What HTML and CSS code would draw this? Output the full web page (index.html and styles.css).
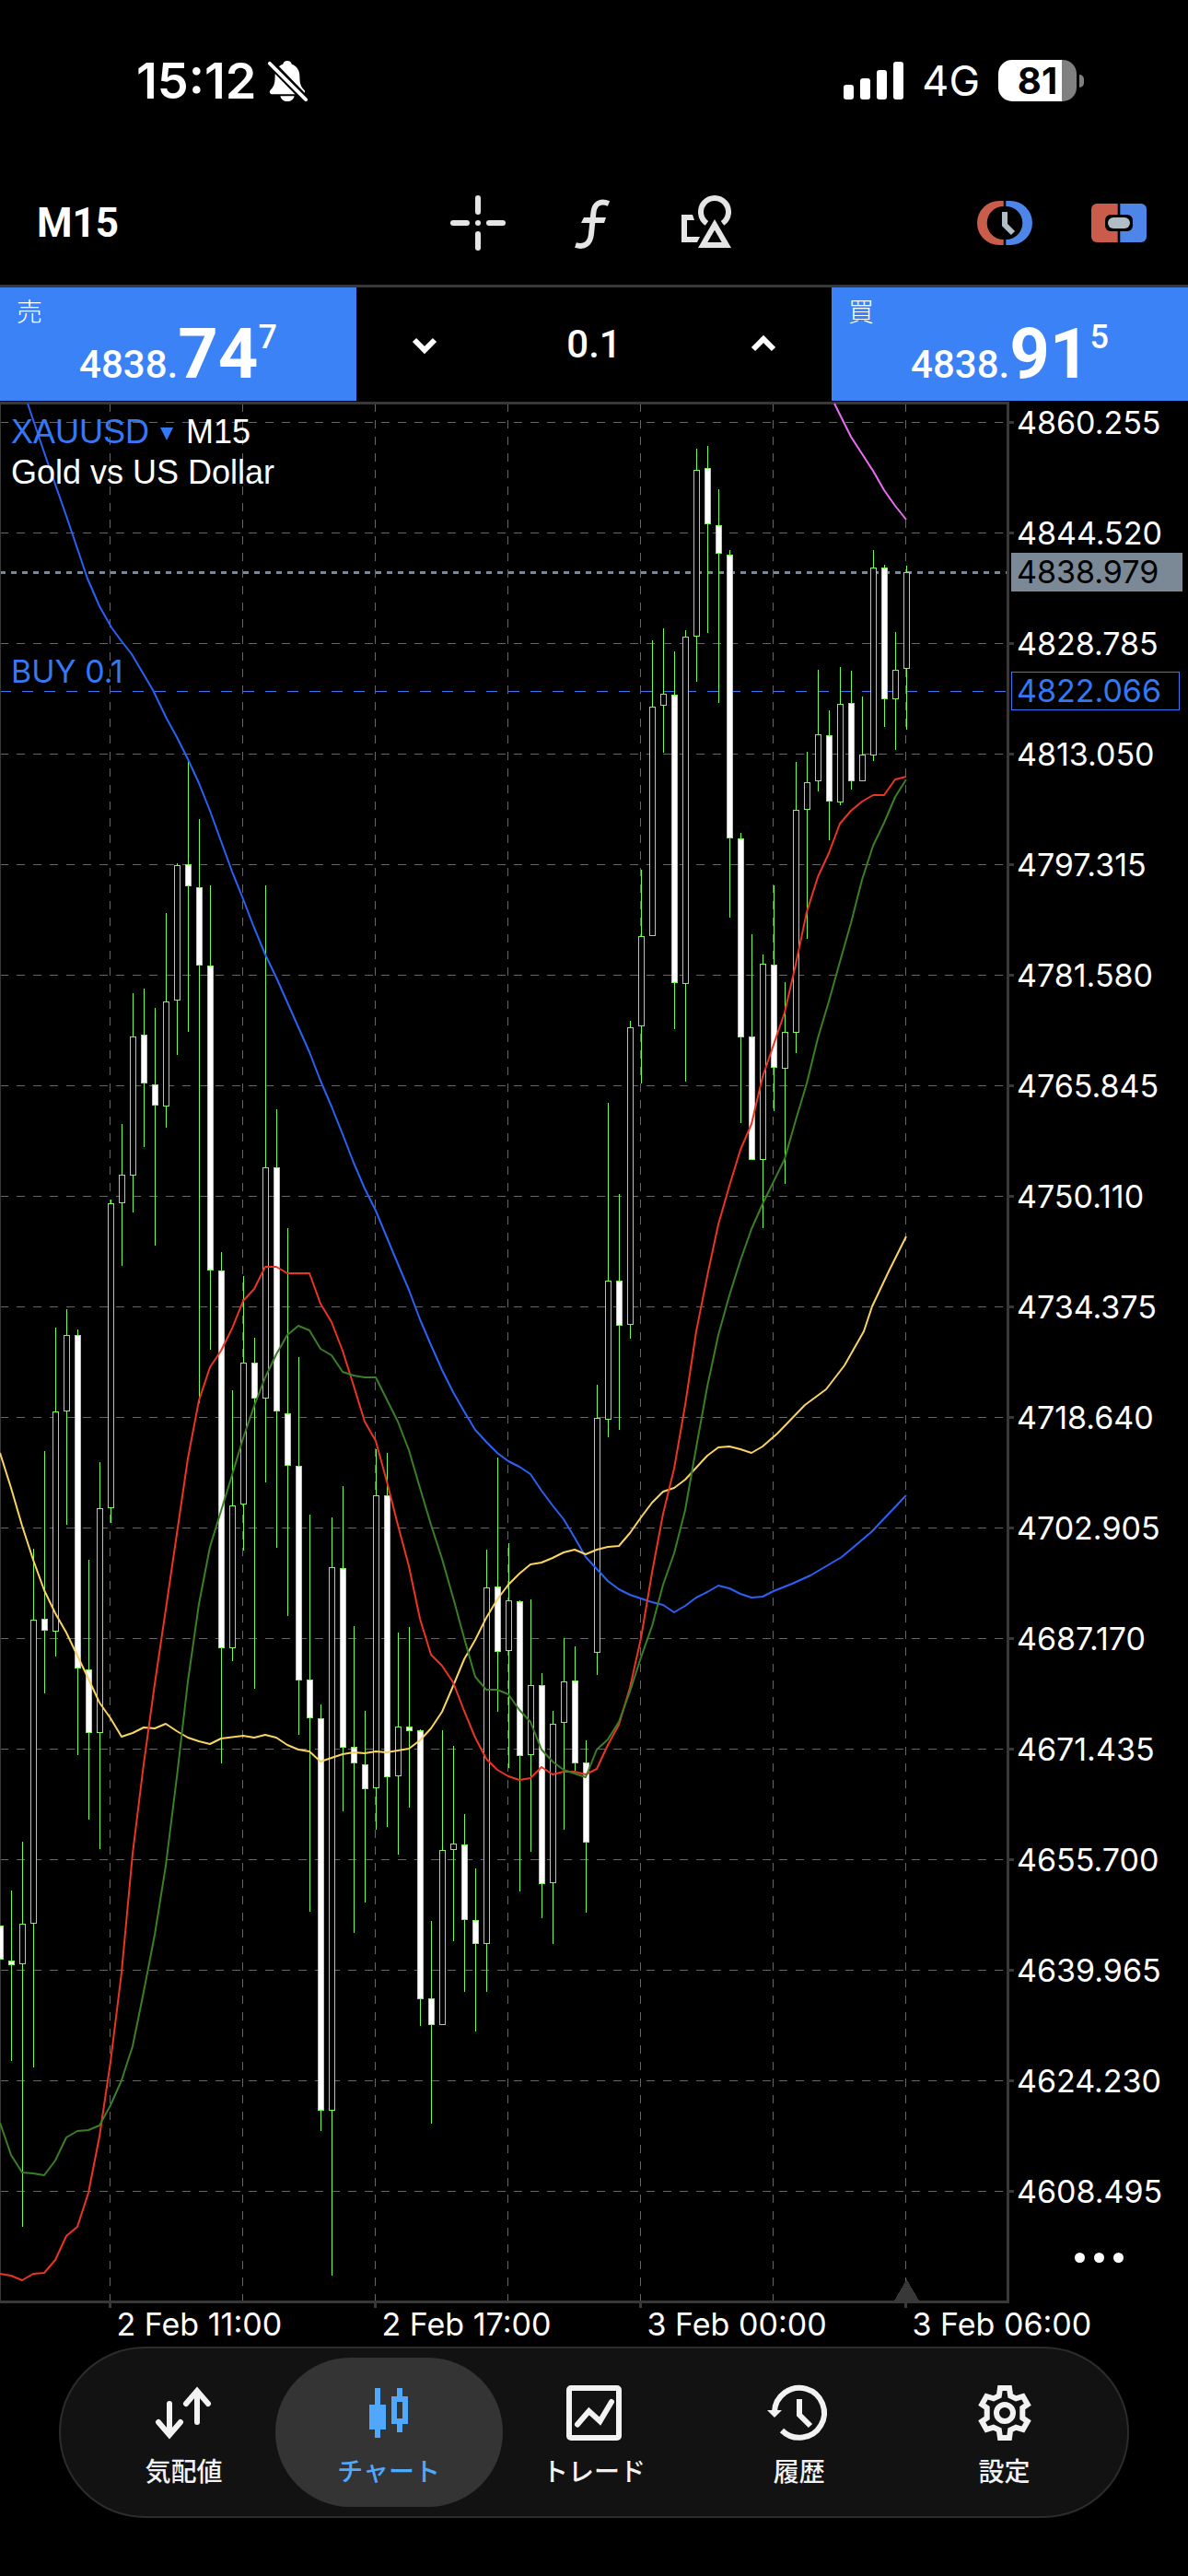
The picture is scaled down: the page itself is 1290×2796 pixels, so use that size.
FILE: index.html
```html
<!DOCTYPE html>
<html lang="ja">
<head>
    <meta charset="UTF-8">
    <meta name="viewport" content="width=device-width, initial-scale=1.0, viewport-fit=cover">
    <title>XAUUSD M15</title>
    <link rel="stylesheet" href="styles.css">
</head>
<body>
    <div class="app">
        <div class="statusbar">
            <div class="status-left">
                <span class="clock">15:12</span>
                <svg class="bell" viewBox="0 0 46 48" aria-label="消音">
                    <path fill="#fff" d="M23 1c3 0 4.500 1.500 5 4 6 2 9 7 9 14 0 9 2 12 5 15 2 2 1 5-2 5H6c-3 0-4-3-2-5 3-3 5-6 5-15 0-7 3-12 9-14 .5-2.500 2-4 5-4Z"/>
                    <path fill="#fff" d="M15 41h16c-1 4-4 6-8 6s-7-2-8-6Z"/>
                    <path stroke="#000" stroke-width="9" d="M3 3l41 42"/>
                    <path stroke="#fff" stroke-width="4" stroke-linecap="round" d="M3 4l41 41"/>
                </svg>
            </div>
            <div class="status-right">
                <svg class="signal" viewBox="0 0 65 42" aria-label="電波">
                    <g fill="#fff">
                        <rect x="0" y="25" width="11" height="16" rx="3"/>
                        <rect x="18" y="18" width="11" height="23" rx="3"/>
                        <rect x="36" y="9" width="11" height="32" rx="3"/>
                        <rect x="54" y="0" width="11" height="41" rx="3"/>
                    </g>
                </svg>
                <span class="network">4G</span>
                <div class="battery"><span>81</span></div>
            </div>
        </div>

        <header class="toolbar">
            <button class="timeframe" type="button">M15</button>
            <div class="tools">
                <button type="button" aria-label="十字線">
                    <svg class="icon" viewBox="0 0 60 60">
                        <path stroke="#e5e5e5" stroke-width="6" stroke-linecap="round" d="M30 3v15M30 42v15M3 30h15M42 30h15M30 30h0"/>
                    </svg>
                </button>
                <button type="button" aria-label="インディケータ">
                    <svg class="icon" viewBox="0 0 60 60">
                        <path fill="none" stroke="#e5e5e5" stroke-width="6" d="M48 9C38 5 32.500 10 31.500 18L29 42C28 52 22 57 12 54"/>
                        <path fill="#e5e5e5" d="M21 24h24l-2 6H18Z"/>
                    </svg>
                </button>
                <button type="button" aria-label="オブジェクト">
                    <svg class="icon" viewBox="0 0 60 60">
                        <path fill="none" stroke="#e5e5e5" stroke-width="6" d="M30.500 30.400A15 15 0 1 1 47.500 30.400"/>
                        <path fill="#e5e5e5" fill-rule="evenodd" d="M39 26L57 57H21ZM39 37.700L31.300 51H46.700Z"/>
                        <path fill="#e5e5e5" d="M3 21h12l2 6H9v18h14l-3 6H3Z"/>
                    </svg>
                </button>
            </div>
            <div class="modes">
                <button type="button" aria-label="注文">
                    <svg class="icon" viewBox="0 0 60 60">
                        <path fill="#c95c4b" d="M28.700 6H24a24 24 0 0 0 0 48h4.700v-6a18 18 0 0 1 0-36Z"/>
                        <path fill="#4d86e8" d="M31.300 6H36a24 24 0 0 1 0 48h-4.700v-6a18 18 0 0 0 0-36Z"/>
                        <path fill="none" stroke="#b2bec5" stroke-width="6" d="M30 18v14l9 9"/>
                    </svg>
                </button>
                <button type="button" aria-label="ワンクリック">
                    <svg class="icon" viewBox="0 0 60 60">
                        <path fill="#c95c4b" d="M28.700 9H6a6 6 0 0 0-6 6v30a6 6 0 0 0 6 6h22.700Z"/>
                        <path fill="#4d86e8" d="M31.300 9H54a6 6 0 0 1 6 6v30a6 6 0 0 1-6 6H31.300Z"/>
                        <rect x="15" y="21" width="30" height="18" rx="6" fill="#000"/>
                        <rect x="18" y="24" width="24" height="12" rx="6" fill="#b2bec5"/>
                    </svg>
                </button>
            </div>
        </header>

        <div class="trade">
            <button class="quote" type="button">
                <span class="side">売</span>
                <span class="price">4838.<b>74</b><sup>7</sup></span>
            </button>
            <div class="volume">
                <button type="button" aria-label="減らす">
                    <svg class="chevron" viewBox="0 0 28 20"><path d="M3 5l11 11L25 5"/></svg>
                </button>
                <input type="text" value="0.1" aria-label="ロット">
                <button type="button" aria-label="増やす">
                    <svg class="chevron" viewBox="0 0 28 20"><path d="M3 15L14 4l11 11"/></svg>
                </button>
            </div>
            <button class="quote" type="button">
                <span class="side">買</span>
                <span class="price">4838.<b>91</b><sup>5</sup></span>
            </button>
        </div>

        <main class="chart">
            <svg id="chart" viewBox="0 436 1290 2111"></svg>
            <div class="symbol">
                <button type="button"><span class="name">XAUUSD</span><span class="arrow"></span>M15</button>
                <div>Gold vs US Dollar</div>
            </div>
            <button class="more" type="button" aria-label="その他"><i></i><i></i><i></i></button>
        </main>

        <nav class="tabs">
            <a href="#quotes">
                <svg class="icon" viewBox="0 0 60 60"><path class="line round" d="M15 20v33M3 40l12 14 12-14M45 40V7M33 20L45 6l12 14"/></svg>
                <span>気配値</span>
            </a>
            <a href="#chart" class="active">
                <svg class="icon" viewBox="0 0 60 60"><path fill="currentColor" fill-rule="evenodd" d="M15 3h6v18h6v27h-6v9h-6v-9H9V21h6ZM39 3h6v9h6v30h-6v9h-6v-9h-6V12h6ZM39 18v18h6V18Z"/></svg>
                <span>チャート</span>
            </a>
            <a href="#trade">
                <svg class="icon" viewBox="0 0 60 60"><rect class="line" x="3" y="3" width="54" height="54" rx="2"/><path class="line round" d="M12 42.500L24.500 28l12 11L49 18"/></svg>
                <span>トレード</span>
            </a>
            <a href="#history">
                <svg class="icon" viewBox="0 0 60 60"><path class="line" d="M3 29A27 27 0 1 1 11 49M30 15v17l12 12"/><path fill="currentColor" d="M-5 27h16l-8 8Z"/></svg>
                <span>履歴</span>
            </a>
            <a href="#settings">
                <svg class="icon" viewBox="0 0 60 60"><path class="line" d="M25 3H35L36.200 11.500 42.200 14.400 49.800 12 54.800 20.800 49.300 24.500V35.500L54.800 39.200 49.800 48 42.200 45.600 36.200 48.500 35 57H25L23.800 48.500 17.800 45.600 10.200 48 5.200 39.200 10.700 35.500V24.500L5.200 20.800 10.200 12 17.800 14.400 23.800 11.500Z"/><circle class="line" cx="30" cy="30" r="9"/></svg>
                <span>設定</span>
            </a>
        </nav>
    </div>
    <script src="chart.js"></script>
</body>
</html>
```
FILE: styles.css
```css
* {
    margin: 0;
    padding: 0;
    box-sizing: border-box;
}

body {
    min-height: 100vh;
    background: #000;
    color: #fff;
    font-family: Inter, "Noto Sans CJK JP", sans-serif;
    font-size: 33px;
}

button {
    border: none;
    background: none;
    color: inherit;
    font: inherit;
    cursor: pointer;
}

svg {
    display: block;
}

.icon {
    width: 60px;
    height: 60px;
    overflow: visible;
}

/* status bar */
.statusbar {
    display: flex;
    justify-content: space-between;
    align-items: center;
    height: 175px;
    padding: 0 121px 0 148px;
}

.status-left,
.status-right {
    display: flex;
    align-items: center;
}

.status-left {
    gap: 11px;
}

.clock {
    font-size: 54px;
    font-weight: 600;
}

.bell {
    width: 44px;
    height: 46px;
}

.signal {
    width: 65px;
    height: 42px;
}

.network {
    margin: 0 20px;
    font-size: 45px;
}

.battery {
    position: relative;
    width: 85px;
    height: 45px;
    border-radius: 15px;
    background: linear-gradient(90deg, #fff 81%, #808080 81%);
    color: #000;
    font-size: 40px;
    font-weight: 700;
    line-height: 45px;
    text-align: center;
}

.battery::after {
    content: "";
    position: absolute;
    right: -8px;
    top: 16px;
    width: 5px;
    height: 14px;
    border-radius: 0 5px 5px 0;
    background: #808080;
}

/* toolbar */
.toolbar {
    display: grid;
    grid-template-columns: 1fr auto 1fr;
    align-items: center;
    height: 137px;
    padding: 0 45px 0 40px;
    border-bottom: 3px solid #383838;
}

.timeframe,
.price,
.volume input {
    font-family: Roboto, sans-serif;
}

.timeframe {
    justify-self: start;
    font-size: 44px;
    font-weight: 700;
}

.tools,
.modes {
    display: flex;
    gap: 64px;
}

.modes {
    justify-self: end;
}

/* one click trading */
.trade {
    display: grid;
    grid-template-columns: 3fr 4fr 3fr;
    grid-template-rows: 123px;
    padding-bottom: 1px;
}

.quote {
    position: relative;
    background: #3b82f6;
    text-align: center;
}

.side {
    position: absolute;
    left: 18px;
    top: 7px;
    font-size: 28px;
    font-weight: 300;
    line-height: 40px;
}

.price {
    display: flex;
    justify-content: center;
    align-items: baseline;
    padding-top: 24px;
    font-size: 42px;
    font-weight: 500;
    line-height: 96px;
}

.price b {
    font-size: 76px;
    font-weight: 700;
}

.price sup {
    align-self: flex-start;
    font-size: 36px;
    line-height: 60px;
}

.volume {
    display: flex;
    align-items: center;
    justify-content: space-between;
    padding: 0 60px;
}

.volume input {
    width: 120px;
    border: none;
    background: none;
    color: #fff;
    font-size: 42px;
    font-weight: 500;
    text-align: center;
}

.chevron {
    width: 28px;
    height: 20px;
    fill: none;
    stroke: #fff;
    stroke-width: 6;
}

/* chart */
.chart {
    position: relative;
}

#chart {
    width: 100%;
    font-size: 34px;
    overflow: visible;
}

.symbol {
    position: absolute;
    left: 12px;
    top: 11px;
    font-family: "Liberation Sans", sans-serif;
    font-size: 36px;
    line-height: 44px;
}

.symbol button {
    display: flex;
    align-items: center;
}

.name {
    color: #3478f6;
}

.arrow {
    margin: 4px 14px 0 12px;
    border: 7px solid transparent;
    border-top: 14px solid #3478f6;
    border-bottom: none;
}

.more {
    position: absolute;
    right: 70px;
    bottom: 91px;
    display: flex;
    gap: 10px;
}

.more i {
    width: 11px;
    height: 11px;
    border-radius: 50%;
    background: #fff;
}

.frame { stroke: #383838; stroke-width: 3; fill: none; }
.grid { stroke: #666; stroke-dasharray: 9 9; }
.bid { stroke: #7b8896; stroke-width: 3; stroke-dasharray: 6 6; }
.order { stroke: #3478f6; stroke-dasharray: 12 12; }
.candle { stroke: #75fb4c; fill: #000; }
.candle.down { fill: #fff; }
.ma { fill: none; stroke-width: 2; stroke-linejoin: round; }

/* tabs */
.tabs {
    display: flex;
    margin: 0 64px;
    padding: 10px 22px;
    border: 2px solid #2c2c2c;
    border-radius: 93px;
    background: #121212;
}

.tabs a {
    position: relative;
    flex: 1;
    display: flex;
    flex-direction: column;
    align-items: center;
    gap: 15px;
    height: 162px;
    padding-top: 30px;
    color: #f2f2f2;
    font-size: 28px;
    font-weight: 500;
    line-height: 38px;
    text-decoration: none;
}

.tabs a > * {
    position: relative;
}

.tabs .active {
    color: #4fa8fb;
}

.tabs .active::before {
    content: "";
    position: absolute;
    inset: 0 -12px;
    border-radius: 81px;
    background: #343434;
}

.line {
    fill: none;
    stroke: currentColor;
    stroke-width: 6;
}

.round {
    stroke-linecap: round;
}
```
FILE: chart.js
```js
const STEP = 12;
const TOP = 438;
const BOTTOM = 2498;
const RIGHT = 1094;

// [high, body top, body bottom, low, down]
const candles = [
    [2090, 2090, 2126, 2126, 1], [2052, 2128, 2132, 2237, 1], [1999, 2088, 2131, 2417, 0], [1681, 1758, 2087, 2244, 0],
    [1575, 1757, 1769, 1838, 1], [1441, 1532, 1770, 1798, 0], [1421, 1449, 1531, 1655, 0], [1443, 1449, 1810, 1905, 1],
    [1693, 1812, 1880, 1975, 1], [1587, 1637, 1880, 2007, 0], [1302, 1306, 1636, 1653, 0], [1220, 1275, 1305, 1374, 0],
    [1078, 1125, 1275, 1316, 0], [1073, 1123, 1175, 1245, 1], [1094, 1177, 1199, 1352, 1], [991, 1087, 1200, 1224, 0],
    [937, 939, 1085, 1145, 0], [826, 938, 961, 1120, 1], [889, 963, 1047, 1523, 1], [961, 1048, 1378, 1465, 1],
    [1359, 1379, 1788, 1914, 1], [1509, 1634, 1788, 1803, 0], [1385, 1479, 1632, 1683, 0], [1452, 1479, 1517, 1833, 1],
    [961, 1267, 1517, 1609, 0], [1204, 1267, 1531, 1680, 1], [1333, 1534, 1590, 1754, 1], [1473, 1591, 1823, 1883, 1],
    [1644, 1823, 1864, 2075, 1], [1850, 1865, 2290, 2313, 1], [1647, 1701, 2290, 2470, 0], [1613, 1702, 1896, 1966, 1],
    [1765, 1896, 1913, 2098, 1], [1857, 1915, 1941, 2065, 1], [1573, 1623, 1940, 1986, 0], [1577, 1623, 1928, 1983, 1],
    [1772, 1874, 1927, 2013, 0], [1766, 1874, 1878, 1962, 1], [1877, 1878, 2169, 2199, 1], [2085, 2169, 2197, 2305, 1],
    [1878, 2008, 2197, 2197, 0], [1895, 2001, 2007, 2107, 0], [1969, 2002, 2083, 2162, 1], [2028, 2084, 2109, 2205, 1],
    [1682, 1723, 2109, 2162, 0], [1582, 1722, 1792, 1858, 1], [1675, 1737, 1791, 1919, 0], [1737, 1738, 1905, 2053, 1],
    [1736, 1829, 1904, 2010, 0], [1816, 1829, 2044, 2082, 1], [1857, 1871, 2043, 2110, 0], [1778, 1825, 1869, 1986, 0],
    [1787, 1824, 1913, 1922, 1], [1889, 1913, 1999, 2076, 1], [1503, 1539, 1793, 1818, 0], [1197, 1390, 1540, 1560, 0],
    [1296, 1390, 1438, 1552, 1], [1108, 1115, 1437, 1453, 0], [944, 1016, 1113, 1176, 0], [695, 767, 1015, 1015, 0],
    [682, 753, 765, 817, 0], [707, 754, 1066, 1117, 1], [684, 691, 1067, 1174, 0], [487, 510, 690, 740, 0],
    [484, 508, 568, 687, 1], [531, 570, 600, 763, 1], [597, 602, 909, 996, 1], [904, 910, 1125, 1219, 1],
    [1014, 1125, 1258, 1258, 1], [1036, 1046, 1258, 1333, 0], [961, 1047, 1158, 1206, 1], [1066, 1120, 1159, 1285, 0],
    [827, 879, 1120, 1143, 0], [816, 849, 878, 1019, 0], [727, 797, 847, 859, 0], [771, 798, 869, 912, 1],
    [724, 764, 870, 874, 0], [728, 763, 847, 857, 1], [756, 819, 847, 847, 0], [597, 616, 819, 826, 0],
    [613, 616, 758, 789, 1], [686, 727, 758, 814, 0], [614, 621, 725, 792, 0]
];

const averages = [
    { color: '#2b62f6', points: '30,438 51,500 72,560 95,628 108,658 121,681 132,696 143,710 156,732 166,749 181,780 192,800 204,824 216,850 228,880 240,913 252,946 264,976 276,1007 288,1036 300,1061 312,1088 324,1115 336,1142 348,1173 360,1201 372,1231 384,1262 396,1290 408,1314 430,1367 444,1400 456,1432 468,1460 480,1487 492,1511 504,1532 516,1552 528,1565 540,1577 552,1586 564,1592 576,1600 588,1618 600,1634 612,1649 624,1669 636,1690 648,1703 660,1716 672,1725 684,1731 696,1735 708,1739 720,1742 732,1750 744,1743 756,1734 768,1728 780,1721 792,1724 804,1730 816,1734 828,1733 840,1727 860,1719 880,1710 914,1690 946,1663 984,1623' },
    { color: '#f9d461', points: '0,1577 12,1615 24,1656 36,1693 48,1726 60,1751 72,1772 84,1797 96,1822 108,1848 120,1865 132,1885 144,1881 156,1875 168,1876 180,1871 192,1879 204,1886 216,1890 228,1893 240,1887 264,1884 276,1886 288,1883 300,1886 312,1894 324,1899 336,1901 348,1912 360,1908 372,1904 384,1902 396,1903 408,1901 420,1902 432,1900 444,1898 456,1889 468,1876 480,1858 492,1830 504,1801 516,1780 528,1756 540,1736 552,1720 564,1708 576,1698 588,1696 600,1691 612,1685 624,1682 636,1687 648,1682 660,1679 672,1678 684,1664 696,1647 708,1631 720,1619 732,1615 744,1606 756,1593 768,1580 780,1571 792,1570 804,1573 816,1577 828,1570 844,1556 874,1525 897,1508 917,1482 938,1445 947,1418 965,1380 984,1342' },
    { color: '#eb3424', points: '0,2468 12,2470 24,2475 36,2468 48,2467 60,2453 72,2427 84,2417 96,2380 108,2319 120,2238 132,2141 144,2012 156,1915 168,1828 180,1747 192,1665 204,1583 216,1520 228,1484 240,1466 252,1442 264,1412 276,1399 288,1375 300,1375 312,1382 336,1382 348,1415 360,1435 372,1466 384,1504 396,1543 408,1564 420,1608 432,1655 444,1700 456,1757 468,1796 480,1808 492,1826 504,1857 516,1886 528,1909 540,1921 552,1928 564,1932 576,1930 588,1918 600,1926 612,1923 624,1923 636,1926 648,1920 660,1894 672,1872 684,1832 696,1778 708,1707 720,1643 732,1594 744,1525 756,1445 769,1380 780,1329 792,1287 804,1248 816,1220 828,1169 840,1134 852,1099 864,1047 876,990 888,952 900,926 912,894 924,880 936,870 948,863 960,863 972,846 984,843' },
    { color: '#3a7f25', points: '0,2304 12,2339 24,2358 36,2359 48,2361 60,2345 72,2320 84,2313 96,2312 108,2307 120,2285 132,2258 144,2221 156,2162 168,2100 180,2025 192,1929 204,1825 216,1741 228,1679 240,1640 252,1601 264,1561 276,1526 288,1495 300,1470 312,1449 324,1439 336,1444 348,1464 360,1471 372,1489 384,1493 396,1495 408,1495 420,1519 432,1543 444,1574 456,1615 468,1655 480,1692 492,1734 504,1778 516,1820 528,1834 540,1834 552,1839 564,1856 576,1869 588,1899 600,1912 612,1921 624,1925 636,1929 648,1899 660,1888 672,1869 684,1836 696,1799 708,1765 720,1720 732,1686 744,1639 756,1571 768,1505 780,1449 792,1406 804,1368 816,1334 828,1307 852,1258 864,1216 876,1176 888,1127 900,1087 912,1044 924,1002 936,955 948,918 960,893 972,865 984,846' },
    { color: '#ee6cf4', points: '906,438 924,474 948,511 960,532 972,549 984,564' }
];

const line = (cls, x1, y1, x2, y2) => `<line class="${cls}" x1="${x1}" y1="${y1}" x2="${x2}" y2="${y2}"/>`;
const text = (x, y, value, fill = '#fff') => `<text x="${x}" y="${y}" fill="${fill}">${value}</text>`;

let out = '<g shape-rendering="crispEdges">';

// grid
for (let i = 0; i < 7; i++) {
    const x = 119.5 + i * 144;
    out += line('grid', x, TOP, x, BOTTOM);
}
for (let i = 0; i < 17; i++) {
    const y = 458.5 + i * 120;
    out += line('grid', 0, y, RIGHT, y);
    out += line('frame', RIGHT, y, RIGHT + 7, y);
}
out += line('bid', 0, 621.5, RIGHT, 621.5);
out += line('order', 0, 750.5, RIGHT, 750.5);
out += `<path d="M984.5 2474l14 24h-28z" fill="#383838"/>`;
out += `<path class="frame" d="M0 437.5H${RIGHT + 0.5}V2498.500H0"/>`;
out += `<path d="M0.5 438V2498" stroke="#383838"/>`;

// candles
candles.forEach(([high, top, bottom, low, down], i) => {
    const x = i * STEP + 0.5;
    out += line('candle', x, high, x, low);
    out += `<rect class="candle${down ? ' down' : ''}" x="${x - 3}" y="${top + 0.5}" width="6" height="${bottom - top}"/>`;
});
out += '</g>';

averages.forEach(ma => {
    out += `<polyline class="ma" stroke="${ma.color}" points="${ma.points}"/>`;
});

// price scale
for (let i = 0; i < 17; i++) {
    out += text(1104, 471 + i * 120, (4860.255 - i * 15.735).toFixed(3));
}
out += `<rect x="1098" y="600" width="186" height="42" fill="#7b8896"/>`;
out += text(1104, 633, '4838.979', '#000');
out += `<rect x="1098.5" y="729.5" width="182" height="41" fill="#000" stroke="#3478f6"/>`;
out += text(1104, 762, '4822.066', '#3478f6');
out += text(12, 741, 'BUY 0.1', '#3478f6');

// time scale
['2 Feb 11:00', '2 Feb 17:00', '3 Feb 00:00', '3 Feb 06:00'].forEach((label, i) => {
    const x = 119.5 + i * 288;
    out += line('frame', x, 2498, x, 2505);
    out += text(x + 7, 2535, label);
});

document.getElementById('chart').innerHTML = out;
```
